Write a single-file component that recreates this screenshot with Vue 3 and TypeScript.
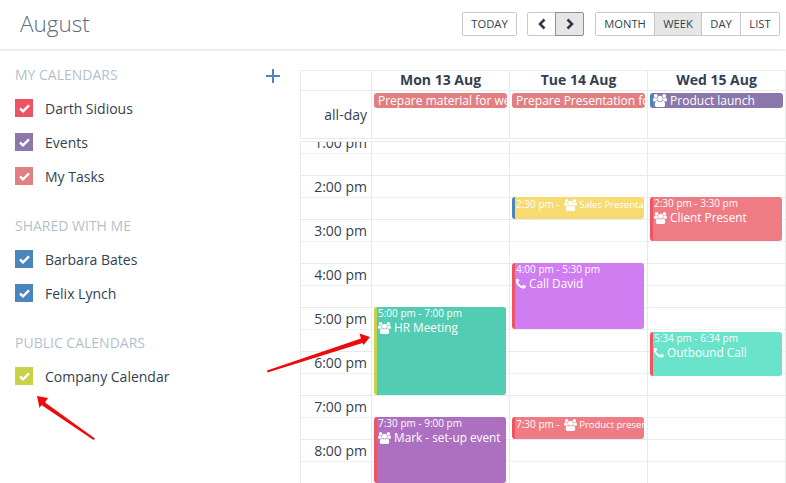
<script setup lang="ts">
interface CalItem { name: string; color: string }
interface CalGroup { title: string; items: CalItem[]; add?: boolean }
interface CalEvent {
  start: number; hours: number; time: string; title: string;
  icon?: 'users' | 'phone'; bg: string; bar: string; inline?: boolean
}
interface Day { label: string; allDay: { title: string; bg: string; bar?: string; icon?: boolean }; events: CalEvent[] }

const RED = '#ed5565'
const BLUE = '#4a86bd'

const groups: CalGroup[] = [
  { title: 'MY CALENDARS', add: true, items: [
    { name: 'Darth Sidious', color: RED },
    { name: 'Events', color: '#8c77ab' },
    { name: 'My Tasks', color: '#e08083' }
  ] },
  { title: 'SHARED WITH ME', items: [
    { name: 'Barbara Bates', color: BLUE },
    { name: 'Felix Lynch', color: BLUE }
  ] },
  { title: 'PUBLIC CALENDARS', items: [
    { name: 'Company Calendar', color: '#c9d147' }
  ] }
]

const hours = ['1:00 pm', '2:00 pm', '3:00 pm', '4:00 pm', '5:00 pm', '6:00 pm', '7:00 pm', '8:00 pm', '9:00 pm']

const days: Day[] = [
  {
    label: 'Mon 13 Aug',
    allDay: { title: 'Prepare material for webinar', bg: '#e08083' },
    events: [
      { start: 17, hours: 2, time: '5:00 pm - 7:00 pm', title: 'HR Meeting', icon: 'users', bg: '#52ccb2', bar: '#c9d147' },
      { start: 19.5, hours: 1.5, time: '7:30 pm - 9:00 pm', title: 'Mark - set-up event', icon: 'users', bg: '#ad6fbf', bar: RED }
    ]
  },
  {
    label: 'Tue 14 Aug',
    allDay: { title: 'Prepare Presentation for client', bg: '#e08083' },
    events: [
      { start: 14.5, hours: 0.5, time: '2:30 pm - ', title: 'Sales Presentation', icon: 'users', bg: '#f7da70', bar: BLUE, inline: true },
      { start: 16, hours: 1.5, time: '4:00 pm - 5:30 pm', title: 'Call David', icon: 'phone', bg: '#cf7df0', bar: RED },
      { start: 19.5, hours: 0.5, time: '7:30 pm - ', title: 'Product presentation', icon: 'users', bg: '#ef7c85', bar: RED, inline: true }
    ]
  },
  {
    label: 'Wed 15 Aug',
    allDay: { title: 'Product launch', bg: '#8c77ab', bar: BLUE, icon: true },
    events: [
      { start: 14.5, hours: 1, time: '2:30 pm - 3:30 pm', title: 'Client Present', icon: 'users', bg: '#ef7c85', bar: RED },
      { start: 17.567, hours: 1, time: '5:34 pm - 6:34 pm', title: 'Outbound Call', icon: 'phone', bg: '#69e3c9', bar: RED }
    ]
  }
]

const HOUR_PX = 44
function eventStyle(e: CalEvent) {
  return {
    top: `${(e.start - 13) * HOUR_PX}px`,
    height: `${e.hours * HOUR_PX}px`,
    background: e.bg,
    borderLeftColor: e.bar
  }
}

const usersPath = 'M593 896q-162 5-265 128h-134q-82 0-138-40.500t-56-118.500q0-353 124-353 6 0 43.500 21t97.500 42.500 119 21.500q67 0 133-23-5 37-5 66 0 139 81 256zm1071 637q0 120-73 189.500t-194 69.500h-874q-121 0-194-69.500t-73-189.500q0-53 3.500-103.500t14-109 26.500-108.500 43-97.500 62-81 85.500-53.500 111.500-20q10 0 43 21.500t73 48 107 48 135 21.500 135-21.500 107-48 73-48 43-21.500q61 0 111.500 20t85.500 53.500 62 81 43 97.500 26.500 108.500 14 109 3.500 103.500zm-1024-1277q0 106-75 181t-181 75-181-75-75-181 75-181 181-75 181 75 75 181zm704 384q0 159-112.500 271.500t-271.500 112.500-271.500-112.500-112.500-271.500 112.500-271.500 271.500-112.500 271.500 112.500 112.500 271.500zm576 225q0 78-56 118.500t-138 40.500h-134q-103-123-265-128 81-117 81-256 0-29-5-66 66 23 133 23 59 0 119-21.500t97.500-42.500 43.500-21q124 0 124 353zm-128-609q0 106-75 181t-181 75-181-75-75-181 75-181 181-75 181 75 75 181z'
const phonePath = 'M1600 1240q0 27-10 70.500t-21 68.500q-21 50-122 106-94 51-186 51-27 0-53-3.500t-57.500-12.500-47-14.500-55.500-20.500-49-18q-98-35-175-83-127-79-264-216t-216-264q-48-77-83-175-3-9-18-49t-20.500-55.500-14.500-47-12.500-57.500-3.500-53q0-92 51-186 56-101 106-122 25-11 68.500-21t70.500-10q14 0 21 3 18 6 53 76 11 19 30 54t35 63.500 31 53.500q3 4 17.500 25t21.500 35.500 7 28.500q0 20-28.500 50t-62 55-62 53-28.500 46q0 9 5 22.500t8.500 20.500 14 24 11.500 19q76 137 174 235t235 174q2 1 19 11.500t24 14 20.500 8.500 22.500 5q18 0 46-28.500t53-62 55-62 50-28.500q14 0 28.500 7t35.500 21.500 25 17.500q25 15 53.500 31t63.500 35 54 30q70 35 76 53 3 7 3 21z'
</script>

<template>
  <div class="page">
    <header class="topbar">
      <h1 class="month">August</h1>
      <div class="tools">
        <button class="btn today">TODAY</button>
        <div class="btn-group">
          <button class="btn nav">
            <svg width="10" height="12" viewBox="0 0 10 12"><path d="M7.500 1.500 3 6l4.500 4.500" fill="none" stroke="#2f3a4c" stroke-width="2.600" /></svg>
          </button>
          <button class="btn nav active dark">
            <svg width="10" height="12" viewBox="0 0 10 12"><path d="M2.500 1.500 7 6l-4.500 4.500" fill="none" stroke="#2f3a4c" stroke-width="2.600" /></svg>
          </button>
        </div>
        <div class="btn-group views">
          <button class="btn view month-btn">MONTH</button>
          <button class="btn view week-btn active">WEEK</button>
          <button class="btn view day-btn">DAY</button>
          <button class="btn view list-btn">LIST</button>
        </div>
      </div>
    </header>

    <div class="content">
      <aside class="sidebar">
        <section v-for="g in groups" :key="g.title" class="group">
          <div class="group-head">
            <span>{{ g.title }}</span>
            <svg v-if="g.add" class="plus" width="14" height="14" viewBox="0 0 14 14"><path d="M7 0v14M0 7h14" stroke="#4a86bd" stroke-width="2" /></svg>
          </div>
          <label v-for="c in g.items" :key="c.name" class="cal-row">
            <span class="check" :style="{ background: c.color }">
              <svg width="11" height="9" viewBox="0 0 11 9"><path d="M1 4.500 4 7.300 10 1.300" fill="none" stroke="#fff" stroke-width="2.400" /></svg>
            </span>
            <span>{{ c.name }}</span>
          </label>
        </section>
      </aside>

      <main class="calendar">
        <div class="cal-head">
          <div class="axis-cell"></div>
          <div v-for="d in days" :key="d.label" class="head-cell">{{ d.label }}</div>
        </div>
        <div class="cal-allday">
          <div class="axis-cell allday-label">all-day</div>
          <div v-for="d in days" :key="d.label" class="allday-cell">
            <div class="allday-event" :class="{ barred: d.allDay.bar }" :style="{ background: d.allDay.bg, borderLeftColor: d.allDay.bar }">
              <svg v-if="d.allDay.icon" class="ic" width="14" height="13" viewBox="0 0 1920 1792"><path :d="usersPath" fill="#fff" /></svg>
              {{ d.allDay.title }}
            </div>
          </div>
        </div>
        <div class="cal-body">
          <div class="slots">
            <div class="axis">
              <div v-for="h in hours" :key="h" class="hour">
                <div class="half label">{{ h }}</div>
                <div class="half"></div>
              </div>
            </div>
            <div v-for="d in days" :key="d.label" class="day">
              <div v-for="h in hours" :key="h" class="hour">
                <div class="half"></div>
                <div class="half"></div>
              </div>
              <div v-for="e in d.events" :key="e.title" class="event" :style="eventStyle(e)">
                <template v-if="e.inline">
                  <div class="inline-line">
                    <span class="time">{{ e.time }}</span>
                    <svg class="ic-small" width="13" height="12" viewBox="0 0 1920 1792"><path :d="usersPath" fill="#fff" /></svg>
                    <span class="small-title">{{ e.title }}</span>
                  </div>
                </template>
                <template v-else>
                  <div class="time">{{ e.time }}</div>
                  <div class="title">
                    <svg v-if="e.icon === 'users'" class="ic" width="13" height="12" viewBox="0 0 1920 1792"><path :d="usersPath" fill="#fff" /></svg>
                    <svg v-else class="ic phone" width="10" height="10" viewBox="256 256 1344 1344"><path :d="phonePath" fill="#fff" /></svg>
                    {{ e.title }}
                  </div>
                </template>
              </div>
            </div>
          </div>
        </div>
      </main>
    </div>

    <svg class="arrows" width="786" height="483" viewBox="0 0 786 483">
      <polygon points="370,337 359.500,333.500 361,338.500 267,370.500 267.500,372.500 362.500,343 363.500,345" fill="#ee0a0a" />
      <polygon points="37,396 48,398 45,402.500 95,438.500 93.500,440 41.500,405 39.500,408" fill="#ee0a0a" />
    </svg>
  </div>
</template>

<style>
html, body { margin: 0; height: 100%; overflow: hidden; background: #fff; }
</style>

<style scoped>
.page {
  position: relative;
  display: flex;
  flex-direction: column;
  width: 786px;
  height: 483px;
  overflow: hidden;
  font-family: "Open Sans", "Liberation Sans", sans-serif;
  font-size: 14px;
  color: #333f52;
}
.topbar {
  flex: none;
  height: 49px;
  box-sizing: border-box;
  display: flex;
  align-items: flex-start;
  justify-content: space-between;
  padding: 11px 6px 0 20px;
  box-shadow: 0 1px 3px rgba(0, 0, 0, .14);
  position: relative;
}
.month {
  margin: 0;
  font-size: 22.500px;
  line-height: 25px;
  font-weight: 300;
  color: #5a6a82;
}
.tools { display: flex; gap: 10px; margin-top: 1px; }
.views { margin-left: 1px; }
.btn-group { display: flex; }
.btn {
  height: 24px;
  box-sizing: border-box;
  margin: 0;
  padding: 0;
  border: 1px solid #c9c9c9;
  border-radius: 2px;
  background: #fff;
  font: 11.200px/22px "Open Sans", "Liberation Sans", sans-serif;
  color: #333f52;
  display: flex;
  align-items: center;
  justify-content: center;
}
.btn-group .btn { border-radius: 0; margin-left: -1px; }
.btn-group .btn:first-child { border-radius: 2px 0 0 2px; margin-left: 0; }
.btn-group .btn:last-child { border-radius: 0 2px 2px 0; }
.btn.active { background: #e6e6e6; }
.btn.dark { border-color: #8f8f8f; position: relative; }
.today { width: 55px; }
.nav { width: 29px; }
.month-btn { width: 60px; }
.week-btn { width: 48px; }
.day-btn { width: 40px; }
.list-btn { width: 40px; }

.content { flex: 1; min-height: 0; display: flex; }
.sidebar { flex: none; width: 300px; box-sizing: border-box; padding: 8px 20px 0 15px; }
.group + .group { margin-top: 15px; }
.group-head {
  height: 34px;
  display: flex;
  align-items: center;
  justify-content: space-between;
  color: #b4bfce;
}
.plus { margin-top: 4px; }
.cal-row {
  height: 34px;
  display: flex;
  align-items: center;
  gap: 12px;
}
.check {
  width: 18px;
  height: 18px;
  display: flex;
  align-items: center;
  justify-content: center;
}

.calendar {
  flex: 1;
  min-width: 0;
  box-sizing: border-box;
  padding-top: 21px;
  display: flex;
  flex-direction: column;
}
.cal-head, .cal-allday, .slots { display: grid; grid-template-columns: 70px 138px 138px 138px; }
.cal-head, .cal-allday, .cal-body { border-left: 1px solid #e6ebf0; border-right: 1px solid #e6ebf0; }
.cal-head {
  flex: none;
  height: 21px;
  box-sizing: border-box;
  border-top: 1px solid #e6ebf0;
  border-bottom: 1px solid #e6ebf0;
}
.head-cell {
  border-left: 1px solid #e6ebf0;
  text-align: center;
  font-weight: 700;
  line-height: 18px;
  white-space: nowrap;
}
.cal-allday {
  flex: none;
  height: 48px;
  box-sizing: border-box;
  border-bottom: 1px solid #e6ebf0;
}
.allday-label {
  display: flex;
  align-items: center;
  justify-content: flex-end;
  padding-right: 4px;
}
.allday-cell {
  border-left: 1px solid #e6ebf0;
  padding: 2px 2px 0;
  min-width: 0;
}
.allday-event {
  height: 15px;
  box-sizing: border-box;
  padding: 0 1px 0 4px;
  border-radius: 3px;
  color: #fff;
  font-size: 12px;
  line-height: 15px;
  white-space: nowrap;
  overflow: hidden;
}
.allday-event.barred { border-left: 3px solid; padding-left: 0; }
.cal-body {
  flex: 1;
  min-height: 0;
  margin-top: 2px;
  border-top: 1px solid #e6ebf0;
  overflow: hidden;
}
.slots { margin-top: -11px; }
.hour { border-top: 1px solid #e6ebf0; height: 44px; box-sizing: border-box; }
.half { height: 21px; box-sizing: border-box; }
.half:first-child { height: 22px; border-bottom: 1px dotted #e4e8ec; }
.label {
  text-align: right;
  padding-right: 4px;
  line-height: 21px;
  white-space: nowrap;
}
.axis { min-width: 0; }
.day { position: relative; border-left: 1px solid #e6ebf0; }
.event {
  position: absolute;
  left: 2px;
  right: 3px;
  box-sizing: border-box;
  border-left: 3px solid;
  border-radius: 3px;
  padding: 0 0 0 1px;
  color: #fff;
  overflow: hidden;
  white-space: nowrap;
}
.time { font-size: 10px; line-height: 13px; }
.title { font-size: 11.800px; line-height: 15px; }
.inline-line { display: flex; align-items: center; height: 15px; }
.inline-line .time { white-space: pre; }
.small-title { font-size: 9.500px; line-height: 15px; margin-left: 2px; }
.ic { vertical-align: -2px; }
.ic-small { flex: none; margin-left: 2px; }
.phone { vertical-align: -1px; }
.arrows { position: absolute; left: 0; top: 0; pointer-events: none; }
</style>
